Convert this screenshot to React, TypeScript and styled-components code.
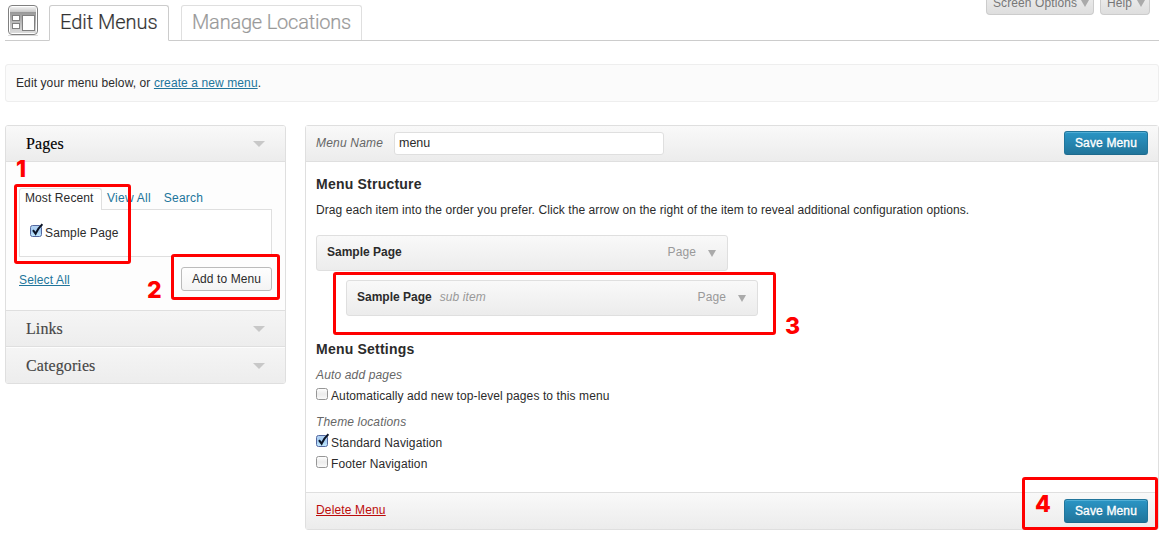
import React from "react";
import styled, { createGlobalStyle, css } from "styled-components";

const GlobalStyle = createGlobalStyle`
  *, *::before, *::after { box-sizing: border-box; }
  body { margin: 0; background: #fff; color: #2b2b2b; font: 12px/18px "Liberation Sans", Arial, sans-serif; }
  h1, h2, h3, p { margin: 0; font-weight: normal; }
`;

const Page = styled.div`
  position: relative;
  width: 1164px;
  height: 535px;
  overflow: hidden;
  padding: 0 5px;
`;

const Text = styled.span<{ $ls?: number }>`
  letter-spacing: ${(p) => p.$ls ?? 0.1}px;
  white-space: nowrap;
`;

const Header = styled.header`
  display: flex;
  align-items: flex-start;
  height: 41px;
  padding: 5px 0 0 3px;
  border-bottom: 1px solid #ccc;
`;

const HeaderIcon = styled.svg`
  flex: none;
  width: 30px;
  height: 31px;
  margin-right: 11px;
`;

const NavTab = styled.h2<{ $active?: boolean; $width: number }>`
  width: ${(p) => p.$width}px;
  height: ${(p) => (p.$active ? 36 : 35)}px;
  margin-right: 12px;
  padding-left: 10px;
  border: 1px solid ${(p) => (p.$active ? "#ccc" : "#dfdfdf")};
  border-bottom: ${(p) => (p.$active ? "1px solid #fff" : "0")};
  border-radius: 3px 3px 0 0;
  color: ${(p) => (p.$active ? "#333" : "#999")};
  font: 300 20px/33px Roboto, "Liberation Sans", sans-serif;
  -webkit-text-stroke: 0.2px currentColor;
  background: #fff;
`;

const ScreenMeta = styled.div`
  display: flex;
  gap: 6px;
  margin: -5px 9px 0 auto;
`;

const MetaTab = styled.button<{ $width: number }>`
  display: flex;
  justify-content: space-between;
  width: ${(p) => p.$width}px;
  height: 15px;
  padding: 0 4px 0 6px;
  border: 1px solid #ccc;
  border-top: 0;
  border-radius: 0 0 4px 4px;
  background: linear-gradient(#e9e9e9, #dedede);
  color: #777;
  font: 12px/7px "Liberation Sans", Arial, sans-serif;
`;

const Notice = styled.div`
  height: 38px;
  margin-top: 23px;
  padding: 0 10px;
  border: 1px solid #eee;
  border-radius: 3px;
  background: #fbfbfb;
  line-height: 36px;
`;

const Link = styled.a<{ $danger?: boolean }>`
  color: ${(p) => (p.$danger ? "#bc0b0b" : "#21759b")};
  text-decoration: underline;
`;

const Columns = styled.div`
  display: flex;
  gap: 19px;
  align-items: flex-start;
  margin-top: 23px;
`;

const Sidebar = styled.aside`
  width: 281px;
  height: 259px;
  border: 1px solid #dfdfdf;
  border-radius: 3px;
  background: #fdfdfd;
  overflow: hidden;
`;

const SectionHead = styled.h3<{ $open?: boolean }>`
  display: flex;
  align-items: center;
  justify-content: space-between;
  height: 36px;
  padding: 0 20px;
  color: ${(p) => (p.$open ? "#000" : "#464646")};
  font: 16px/36px "Liberation Serif", Georgia, serif;
  -webkit-text-stroke: 0.15px currentColor;
  ${(p) =>
    p.$open
      ? css`background: linear-gradient(#f9f9f9, #ececec); border-bottom: 1px solid #dfdfdf;`
      : css`background: linear-gradient(#f5f5f5, #ededed); border-bottom: 1px solid #dfdfdf; margin-bottom: 1px;`}
`;

const Arrow = styled.i<{ $w: number; $h: number; $color: string }>`
  display: block;
  flex: none;
  border-left: ${(p) => p.$w / 2}px solid transparent;
  border-right: ${(p) => p.$w / 2}px solid transparent;
  border-top: ${(p) => p.$h}px solid ${(p) => p.$color};
`;

const SectionBody = styled.div`
  height: 149px;
  margin-bottom: 0;
  padding: 26px 13px 0;
  border-bottom: 1px solid #dfdfdf;
  box-shadow: 0 1px #fff;
`;

const Tabs = styled.div`
  display: flex;
  height: 22px;
`;

const Tab = styled.span<{ $active?: boolean }>`
  height: ${(p) => (p.$active ? 22 : 21)}px;
  padding: 0 ${(p) => (p.$active ? 8 : 6)}px 0 5px;
  color: ${(p) => (p.$active ? "#2b2b2b" : "#21759b")};
  line-height: 19px;
  border: 1px solid transparent;
  border-bottom: 0;
  position: relative;
  ${(p) =>
    p.$active &&
    css`
      width: 83px;
      margin-right: -1px;
      border-color: #dfdfdf;
      border-radius: 3px 3px 0 0;
      background: #fff;
      z-index: 1;
    `}
`;

const TabPanel = styled.div`
  height: 48px;
  margin-top: -1px;
  padding: 13px 10px;
  border: 1px solid #dfdfdf;
  background: #fff;
`;

const CheckLabel = styled.label`
  display: flex;
  height: 21px;
  gap: 2px;
  line-height: 21px;
`;

const CheckSvg = styled.svg`
  flex: none;
  width: 13px;
  height: 15px;
`;

const Actions = styled.div`
  display: flex;
  justify-content: space-between;
  margin-top: 10px;
  line-height: 27px;
`;

const Button = styled.button<{ $primary?: boolean }>`
  width: ${(p) => (p.$primary ? 84 : 91)}px;
  height: 24px;
  padding: 0;
  border: 1px solid #bbb;
  border-radius: 3px;
  background: linear-gradient(#fefefe, #f4f4f4);
  color: #2b2b2b;
  font: 12px/22px "Liberation Sans", Arial, sans-serif;
  ${(p) =>
    p.$primary &&
    css`
      padding-bottom: 1px;
      border-color: #21759b #21759b #1e6a8d;
      background: linear-gradient(#2a95c5, #21759b);
      box-shadow: inset 0 1px 0 rgba(120, 200, 230, 0.5);
      color: #fff;
      -webkit-text-stroke: 0.35px #fff;
      text-shadow: 0 1px 0 rgba(0, 0, 0, 0.1);
    `}
`;

const Editor = styled.main`
  width: 854px;
  height: 405px;
  border: 1px solid #dfdfdf;
  border-radius: 3px;
  background: #fff;
`;

const EditorBar = styled.div<{ $footer?: boolean }>`
  display: flex;
  align-items: center;
  height: ${(p) => (p.$footer ? 37 : 36)}px;
  padding: 0 10px;
  border: 0 solid #dfdfdf;
  border-width: ${(p) => (p.$footer ? "1px 0 0" : "0 0 1px")};
  background: linear-gradient(#f9f9f9, #ececec);
  > button { margin-left: auto; margin-top: ${(p) => (p.$footer ? 0 : -1)}px; }
  > a, > em { margin-bottom: 2px; }
`;

const Emphasis = styled.em`
  color: #666;
`;

const NameInput = styled.input`
  width: 270px;
  height: 23px;
  margin-left: auto;
  margin-right: 400px;
  padding: 0 4px 1px;
  border: 1px solid #dfdfdf;
  border-radius: 3px;
  background: #fff;
  color: #2b2b2b;
  font: 12.5px "Liberation Sans", Arial, sans-serif;
`;

const NameField = styled.label`
  display: flex;
  align-items: center;
  width: 348px;
  > em { margin-bottom: 2px; }
  > input { margin-right: 0; }
`;

const EditorBody = styled.div`
  height: 330px;
  padding: 12px 10px 0;
`;

const Heading = styled.h3`
  height: 20px;
  font-size: 14px;
  line-height: 20px;
  font-weight: bold;
`;

const Intro = styled.p`
  margin: 7px 0 16px;
`;

const MenuItem = styled.div<{ $depth?: number }>`
  display: flex;
  align-items: center;
  width: 412px;
  height: 36px;
  margin: 0 0 9px ${(p) => (p.$depth ?? 0) * 30}px;
  padding: 0 11px 2px 10px;
  border: 1px solid #dfdfdf;
  border-radius: 3px;
  background: linear-gradient(#f9f9f9, #ececec);
  > em { margin-left: 8px; color: #999; }
  > i { margin-left: 12px; margin-top: 3px; }
`;

const ItemType = styled.span`
  margin-left: auto;
  color: #999;
`;

const Settings = styled.section`
  padding-top: 14px;
`;

const SettingTitle = styled.p`
  margin: 7px 0 2px;
  & ~ & { margin-top: 6px; }
`;

const Callout = styled.div<{ $x: number; $y: number; $w: number; $h: number }>`
  position: absolute;
  left: ${(p) => p.$x}px;
  top: ${(p) => p.$y}px;
  width: ${(p) => p.$w}px;
  height: ${(p) => p.$h}px;
  border: 3px solid #f00;
  border-radius: 3px;
  z-index: 3;
`;

const Step = styled.span<{ $x: number; $y: number }>`
  position: absolute;
  left: ${(p) => p.$x}px;
  top: ${(p) => p.$y}px;
  color: #f00;
  font: 800 23px/24px Inter, sans-serif;
  z-index: 3;
`;

const Check = ({ on }: { on?: boolean }) => (
  <CheckSvg viewBox="0 0 13 15">
    <defs>
      <linearGradient id="boxOn" x2="0" y2="1">
        <stop offset="0" stopColor="#b5d3f2" />
        <stop offset="0.5" stopColor="#a5cdf3" />
        <stop offset="1" stopColor="#c4ebff" />
      </linearGradient>
      <linearGradient id="boxOff" x2="0" y2="1">
        <stop offset="0" stopColor="#fff" />
        <stop offset="0.5" stopColor="#ececec" />
        <stop offset="1" stopColor="#fbfbfb" />
      </linearGradient>
    </defs>
    <rect x="0.5" y="2.5" width="11" height="11" rx="2" fill={on ? "url(#boxOn)" : "url(#boxOff)"} stroke={on ? "#5468a0" : "#969696"} />
    {on && <path d="M3 7.2 5.6 10.6Q8 5.2 12.4 1.2" fill="none" stroke="#0b1426" strokeWidth="2.1" />}
  </CheckSvg>
);

const MenusIcon = () => (
  <HeaderIcon viewBox="0 0 30 31">
    <defs>
      <linearGradient id="win" x2="0" y2="1">
        <stop offset="0" stopColor="#989898" />
        <stop offset="1" stopColor="#dcdcdc" />
      </linearGradient>
      <linearGradient id="bar" x2="0" y2="1">
        <stop offset="0" stopColor="#f0f0f0" />
        <stop offset="1" stopColor="#c8c8c8" />
      </linearGradient>
    </defs>
    <path d="M0 30.5h30" stroke="#ddd" />
    <rect x="0.5" y="0.5" width="29" height="29" rx="3.5" fill="#fff" stroke="#808080" />
    <rect x="2" y="2" width="26" height="5" fill="url(#bar)" />
    <rect x="2" y="7" width="26" height="21" fill="url(#win)" />
    <g fill="#fff" stroke="#808080">
      <rect x="4.5" y="10.5" width="7" height="5" />
      <rect x="4.5" y="18.5" width="7" height="5" />
      <rect x="14.5" y="10.5" width="12" height="15" />
    </g>
  </HeaderIcon>
);

export default function App() {
  return (
    <Page>
      <GlobalStyle />
      <Header>
        <MenusIcon />
        <NavTab $active $width={120}><Text $ls={-0.03}>Edit Menus</Text></NavTab>
        <NavTab $width={181}><Text $ls={-0.2}>Manage Locations</Text></NavTab>
        <ScreenMeta>
          <MetaTab $width={108}><Text>Screen Options</Text><Arrow $w={8} $h={7} $color="#aaa" /></MetaTab>
          <MetaTab $width={50}><Text>Help</Text><Arrow $w={8} $h={7} $color="#aaa" /></MetaTab>
        </ScreenMeta>
      </Header>
      <Notice><Text>Edit your menu below, or <Link>create a new menu</Link>.</Text></Notice>
      <Columns>
        <Sidebar>
          <SectionHead $open><Text>Pages</Text><Arrow $w={12} $h={6} $color="#c8c8c8" /></SectionHead>
          <SectionBody>
            <Tabs>
              <Tab $active><Text>Most Recent</Text></Tab>
              <Tab><Text $ls={0.25}>View All</Text></Tab>
              <Tab><Text $ls={0.2}>Search</Text></Tab>
            </Tabs>
            <TabPanel>
              <CheckLabel><Check on /><Text $ls={0.15}>Sample Page</Text></CheckLabel>
            </TabPanel>
            <Actions>
              <Link><Text $ls={0.15}>Select All</Text></Link>
              <Button><Text>Add to Menu</Text></Button>
            </Actions>
          </SectionBody>
          <SectionHead><Text>Links</Text><Arrow $w={12} $h={6} $color="#c8c8c8" /></SectionHead>
          <SectionHead><Text>Categories</Text><Arrow $w={12} $h={6} $color="#c8c8c8" /></SectionHead>
        </Sidebar>
        <Editor>
          <EditorBar>
            <NameField>
              <Emphasis><Text $ls={0.2}>Menu Name</Text></Emphasis>
              <NameInput defaultValue="menu" />
            </NameField>
            <Button $primary><Text $ls={0.15}>Save Menu</Text></Button>
          </EditorBar>
          <EditorBody>
            <Heading><Text $ls={0.22}>Menu Structure</Text></Heading>
            <Intro>
              <Text $ls={0.086}>Drag each item into the order you prefer. Click the arrow on the right of the item to reveal additional configuration options.</Text>
            </Intro>
            <MenuItem>
              <b><Text $ls={0}>Sample Page</Text></b>
              <ItemType><Text>Page</Text></ItemType>
              <Arrow $w={8} $h={7} $color="#aaa" />
            </MenuItem>
            <MenuItem $depth={1}>
              <b><Text $ls={0}>Sample Page</Text></b>
              <em><Text>sub item</Text></em>
              <ItemType><Text>Page</Text></ItemType>
              <Arrow $w={8} $h={7} $color="#aaa" />
            </MenuItem>
            <Settings>
              <Heading><Text $ls={0.22}>Menu Settings</Text></Heading>
              <SettingTitle><Emphasis><Text $ls={0.15}>Auto add pages</Text></Emphasis></SettingTitle>
              <CheckLabel><Check /><Text>Automatically add new top-level pages to this menu</Text></CheckLabel>
              <SettingTitle><Emphasis><Text $ls={0.15}>Theme locations</Text></Emphasis></SettingTitle>
              <CheckLabel><Check on /><Text $ls={0.14}>Standard Navigation</Text></CheckLabel>
              <CheckLabel><Check /><Text>Footer Navigation</Text></CheckLabel>
            </Settings>
          </EditorBody>
          <EditorBar $footer>
            <Link $danger><Text $ls={0.15}>Delete Menu</Text></Link>
            <Button $primary><Text $ls={0.15}>Save Menu</Text></Button>
          </EditorBar>
        </Editor>
      </Columns>
      <Callout $x={14} $y={184} $w={117} $h={80} />
      <Callout $x={171} $y={254} $w={109} $h={46} />
      <Callout $x={333} $y={272} $w={443} $h={63} />
      <Callout $x={1022} $y={477} $w={136} $h={53} />
      <Step $x={16} $y={157}>1</Step>
      <Step $x={147} $y={278}>2</Step>
      <Step $x={785} $y={314}>3</Step>
      <Step $x={1035} $y={492}>4</Step>
    </Page>
  );
}
